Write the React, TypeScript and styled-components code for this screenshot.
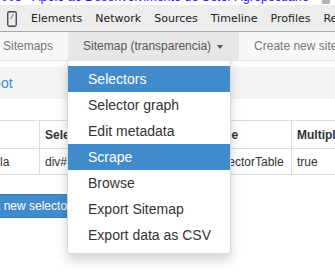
import React from "react";
import styled, { createGlobalStyle } from "styled-components";

const GlobalStyle = createGlobalStyle`
  html, body {
    margin: 0;
    padding: 0;
    background: #fff;
    overflow: hidden;
    width: 335px;
    height: 277px;
  }
  body {
    font-family: "Liberation Sans", Arial, sans-serif;
  }
`;

const Shell = styled.div`
  width: 335px;
  height: 277px;
  overflow: hidden;
  position: relative;
`;

const TitleStrip = styled.div`
  height: 5px;
  overflow: hidden;
  display: flex;
  justify-content: space-between;
  align-items: flex-start;
  padding: 0 5px 0 1px;
`;

const TitleText = styled.div`
  font-size: 12.5px;
  line-height: 15px;
  margin-top: -10px;
  color: #2a1ad8;
  white-space: nowrap;
`;

const TitleIcon = styled.div`
  width: 8px;
  height: 8px;
  margin-top: -4px;
  background: #b4b4b4;
  border-radius: 1px;
`;

const DevBar = styled.div`
  height: 26px;
  background: #ededed;
  border-bottom: 1px solid #a8a8a8;
  display: flex;
  align-items: center;
  padding-left: 7px;
  font-family: "DejaVu Sans", sans-serif;
  font-size: 11px;
  color: #222;
  white-space: nowrap;
`;

const DeviceIcon = styled.svg`
  flex: none;
  margin-right: 14px;
  margin-top: 2px;
`;

const DevTabs = styled.div`
  display: flex;
  gap: 13px;
  margin-top: 1px;
`;

const Page = styled.div`
  margin-left: -32px;
  width: 460px;
`;

const Navbar = styled.ul`
  list-style: none;
  margin: 0;
  padding: 0 0 0 20px;
  height: 28px;
  background: #f8f8f8;
  border-bottom: 1px solid #e2e2e2;
  display: flex;
  font-size: 12px;
`;

const NavItem = styled.li<{ $active?: boolean }>`
  position: relative;
  display: flex;
  align-items: center;
  padding: 0 15px;
  height: 28px;
  color: ${(p) => (p.$active ? "#555" : "#777")};
  background: ${(p) => (p.$active ? "#e7e7e7" : "transparent")};
  white-space: nowrap;
`;

const Caret = styled.span`
  display: inline-block;
  width: 0;
  height: 0;
  margin-left: 6px;
  margin-right: 1px;
  margin-top: 1px;
  border-top: 4px solid #555;
  border-left: 3.5px solid transparent;
  border-right: 3.5px solid transparent;
`;

const Menu = styled.ul`
  position: absolute;
  top: 100%;
  left: -1px;
  width: 162px;
  margin: 0;
  padding: 5px 0;
  list-style: none;
  background: #fff;
  border: 1px solid rgba(0, 0, 0, 0.15);
  border-top-color: rgba(0, 0, 0, 0.1);
  border-radius: 0 0 4px 4px;
  box-shadow: 0 6px 12px rgba(0, 0, 0, 0.175);
  z-index: 10;
`;

const MenuItem = styled.li<{ $active?: boolean }>`
  padding: 3px 20px;
  font-size: 14px;
  line-height: 20px;
  color: ${(p) => (p.$active ? "#fff" : "#333")};
  background: ${(p) => (p.$active ? "#428bca" : "transparent")};
  white-space: nowrap;
`;

const Breadcrumb = styled.div`
  margin-top: 6px;
  height: 32px;
  background: #f5f5f5;
  display: flex;
  align-items: center;
  padding: 0 15px;
  font-size: 14px;
`;

const CrumbLink = styled.span`
  color: #428bca;
`;

const Table = styled.table`
  margin-top: 21px;
  border-collapse: collapse;
  table-layout: fixed;
  width: 460px;
  font-size: 12px;
  color: #333;
`;

const Th = styled.th<{ $w: number }>`
  box-sizing: border-box;
  width: ${(p) => p.$w}px;
  height: 28px;
  padding: 0 5px;
  text-align: left;
  font-weight: bold;
  border: 1px solid #ddd;
  white-space: nowrap;
  overflow: hidden;
`;

const Td = styled.td`
  height: 25px;
  padding: 0 5px;
  border: 1px solid #ddd;
  white-space: nowrap;
  overflow: hidden;
`;

const AddButton = styled.button`
  margin-top: 19px;
  height: 24px;
  padding: 0 10px;
  border: 1px solid #357ebd;
  border-radius: 3px;
  background: #428bca;
  color: #fff;
  font-family: "Liberation Sans", Arial, sans-serif;
  font-size: 12px;
  display: block;
`;

const devTabs = ["Elements", "Network", "Sources", "Timeline", "Profiles", "Resources"];

const menuItems = [
  { label: "Selectors", active: true },
  { label: "Selector graph" },
  { label: "Edit metadata" },
  { label: "Scrape", active: true },
  { label: "Browse" },
  { label: "Export Sitemap" },
  { label: "Export data as CSV" },
];

export default function App() {
  return (
    <Shell>
      <GlobalStyle />
      <TitleStrip>
        <TitleText>003 - Apoio ao Desenvolvimento do Setor Agropecuário</TitleText>
        <TitleIcon />
      </TitleStrip>

      <DevBar>
        <DeviceIcon width="10" height="16" viewBox="0 0 10 16">
          <rect x="0.75" y="0.75" width="8.5" height="14.5" rx="1.5" fill="none" stroke="#444" strokeWidth="1.3" />
          <line x1="6.5" y1="3" x2="3.5" y2="8" stroke="#777" strokeWidth="1" />
        </DeviceIcon>
        <DevTabs>
          {devTabs.map((t) => (
            <span key={t}>{t}</span>
          ))}
        </DevTabs>
      </DevBar>

      <Page>
        <Navbar>
          <NavItem>Sitemaps</NavItem>
          <NavItem $active>
            Sitemap (transparencia)
            <Caret />
            <Menu>
              {menuItems.map((m) => (
                <MenuItem key={m.label} $active={m.active}>
                  {m.label}
                </MenuItem>
              ))}
            </Menu>
          </NavItem>
          <NavItem>Create new sitemap</NavItem>
        </Navbar>

        <Breadcrumb>
          <CrumbLink>Root</CrumbLink>
        </Breadcrumb>

        <Table>
          <thead>
            <tr>
              <Th $w={71}>ID</Th>
              <Th $w={166}>Selector</Th>
              <Th $w={86}>Type</Th>
              <Th $w={137}>Multiple</Th>
            </tr>
          </thead>
          <tbody>
            <tr>
              <Td>Tabela</Td>
              <Td>div#conteudo table</Td>
              <Td>SelectorTable</Td>
              <Td>true</Td>
            </tr>
          </tbody>
        </Table>

        <AddButton>Add new selector</AddButton>
      </Page>
    </Shell>
  );
}
